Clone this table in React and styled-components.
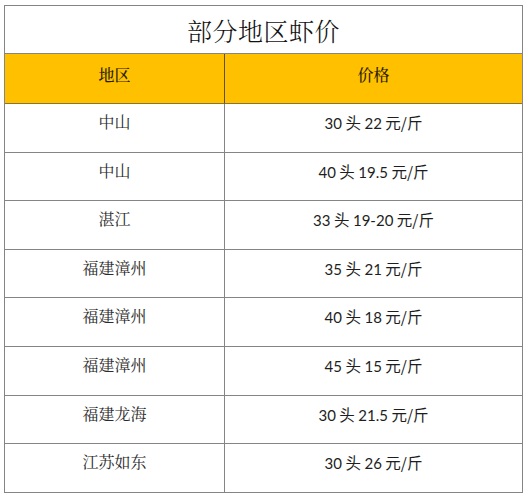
import React from 'react';
import styled, { createGlobalStyle } from 'styled-components';

const GlobalStyle = createGlobalStyle`
  html, body {
    margin: 0;
    padding: 0;
    background: #ffffff;
  }
  body {
    font-family: "Noto Serif CJK SC", "Noto Sans CJK SC", serif;
    color: #222;
  }
`;

const Sheet = styled.div`
  margin: 5px 0 0 4px;
  width: 517px;
  border: 1px solid #858585;
`;

const Title = styled.div`
  height: 47px;
  border-bottom: 1px solid #858585;
  display: flex;
  align-items: center;
  justify-content: center;
  font-size: 25px;
  font-weight: 300;
  color: #111;
  letter-spacing: 0.5px;
`;

const Grid = styled.div`
  display: grid;
  grid-template-columns: 220px 1fr;
`;

const Cell = styled.div`
  box-sizing: content-box;
  background: ${p => (p.$head ? '#ffc000' : '#ffffff')};
  border-bottom: ${p => (p.$last ? 'none' : `1px solid ${p.$head ? '#8a7330' : '#858585'}`)};
  border-right: ${p => (p.$first ? `1px solid ${p.$head ? '#5e5030' : '#858585'}` : 'none')};
  display: flex;
  justify-content: center;
  align-items: flex-start;
  padding-top: ${p => (p.$head ? '11px' : '8px')};
  height: ${p => (p.$head ? '38px' : '39.6px')};
  line-height: 20px;
  font-size: 16px;
  font-weight: ${p => (p.$head ? 500 : 400)};
  color: ${p => (p.$head ? '#2a1f00' : '#2b2b2b')};
  white-space: pre;
`;

const Price = styled.span`
  font-family: "Noto Sans CJK SC", sans-serif;
  font-weight: 400;
  font-size: 15.5px;
  color: #1e1e1e;
`;

const Num = styled.span`
  font-family: Lato, "Noto Sans", sans-serif;
  font-size: 15px;
  font-weight: 400;
`;

const rows = [
  { area: '中山', head: '30', price: '22' },
  { area: '中山', head: '40', price: '19.5' },
  { area: '湛江', head: '33', price: '19-20' },
  { area: '福建漳州', head: '35', price: '21' },
  { area: '福建漳州', head: '40', price: '18' },
  { area: '福建漳州', head: '45', price: '15' },
  { area: '福建龙海', head: '30', price: '21.5' },
  { area: '江苏如东', head: '30', price: '26' },
];

const App = () => {
  return (
    <>
      <GlobalStyle />
      <Sheet>
        <Title>部分地区虾价</Title>
        <Grid>
          <Cell $head $first>地区</Cell>
          <Cell $head>价格</Cell>
          {rows.map((r, i) => {
            const last = i === rows.length - 1;
            return (
              <React.Fragment key={i}>
                <Cell $first $last={last}>{r.area}</Cell>
                <Cell $last={last}>
                  <Price>
                    <Num>{r.head}</Num> 头 <Num>{r.price}</Num> 元/斤
                  </Price>
                </Cell>
              </React.Fragment>
            );
          })}
        </Grid>
      </Sheet>
    </>
  );
};

export default App;
